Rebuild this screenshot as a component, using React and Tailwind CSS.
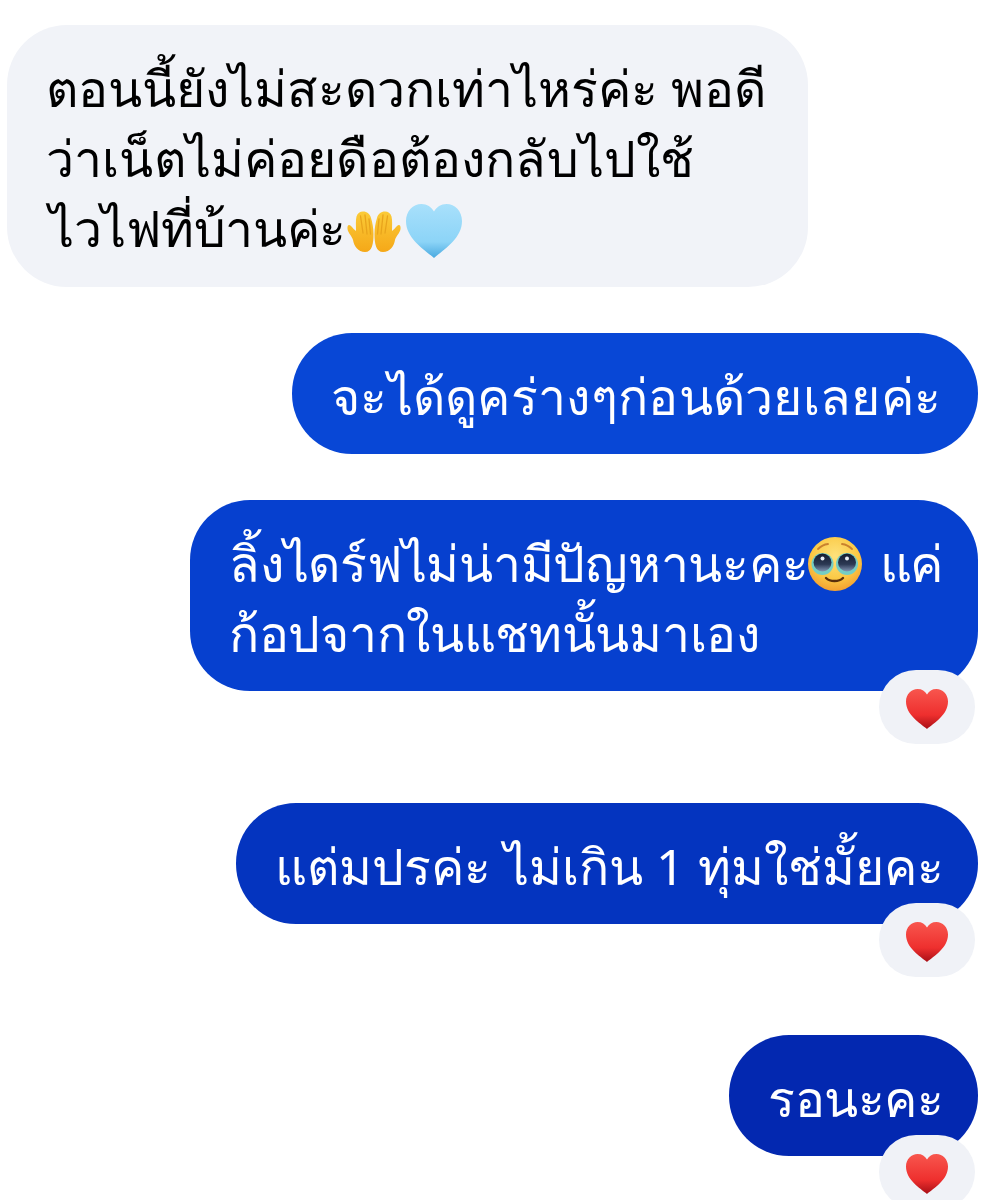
import React from 'react';

const RedHeart = () => (
  <svg width="44" height="42" viewBox="0 0 44 42" className="mt-[3px]">
    <defs>
      <linearGradient id="redHeart" x1="0" y1="0" x2="0" y2="1">
        <stop offset="0" stopColor="#f8564e" />
        <stop offset="0.65" stopColor="#ee2f2e" />
        <stop offset="1" stopColor="#a80f16" />
      </linearGradient>
    </defs>
    <path d="M22 41C15 35 1 27 1 13.500C1 6 6.500 1 12.500 1C17 1 20 3 22 6.500C24 3 27 1 31.500 1C37.500 1 43 6 43 13.500C43 27 29 35 22 41Z" fill="url(#redHeart)" />
  </svg>
);

const BlueHeart = () => (
  <svg width="58" height="56" viewBox="0 0 58 56" className="ml-[3px] mt-[6px]">
    <defs>
      <linearGradient id="blueHeart" x1="0" y1="0" x2="0" y2="1">
        <stop offset="0" stopColor="#a8e0fb" />
        <stop offset="0.7" stopColor="#8cd4f7" />
        <stop offset="1" stopColor="#4aa9e0" />
      </linearGradient>
    </defs>
    <path d="M29 55C20 47 1 36 1 18C1 8 8 1 16.500 1C22 1 26.500 4 29 8.500C31.500 4 36 1 41.500 1C50 1 57 8 57 18C57 36 38 47 29 55Z" fill="url(#blueHeart)" />
  </svg>
);

const HandShape = () => (
  <>
    <path d="M27.500 24C27.500 34 26 42 19 42C12 42 8 36 7 30C6 26 2 23 1.500 19C1 15 3 14 5 16C7 18 8.500 20 10 21C10 15 9.500 11 10.500 6.500C11.500 3 14 1.500 17 1.500C21 1.500 24 4 25 8C26.500 13 27.500 18 27.500 24Z" fill="url(#hand)" />
    <path d="M14.500 6L17 23M19 5L21 24M23 9L24.500 24" stroke="#e8a41c" strokeWidth="1.300" strokeLinecap="round" fill="none" />
  </>
);

const Hands = () => (
  <svg width="56" height="44" viewBox="0 0 56 44" className="mt-[8px]">
    <defs>
      <linearGradient id="hand" x1="0" y1="0" x2="0" y2="1">
        <stop offset="0" stopColor="#fbcb38" />
        <stop offset="1" stopColor="#f5a818" />
      </linearGradient>
    </defs>
    <HandShape />
    <g transform="translate(56 0) scale(-1 1)">
      <HandShape />
    </g>
  </svg>
);

const PleadingFace = () => (
  <svg width="54" height="54" viewBox="0 0 54 54" className="mt-[2px]">
    <defs>
      <radialGradient id="face" cx="0.5" cy="0.35" r="0.7">
        <stop offset="0" stopColor="#fde27c" />
        <stop offset="0.6" stopColor="#fbc945" />
        <stop offset="1" stopColor="#f3982c" />
      </radialGradient>
      <linearGradient id="eye" x1="0" y1="0" x2="0" y2="1">
        <stop offset="0" stopColor="#141c30" />
        <stop offset="0.6" stopColor="#2c3954" />
        <stop offset="1" stopColor="#8296b4" />
      </linearGradient>
    </defs>
    <circle cx="27" cy="27" r="27" fill="url(#face)" />
    <path d="M10 12C13 9 16 7.500 20 7M44 12C41 9 38 7.500 34 7" stroke="#c9822e" strokeWidth="1.800" fill="none" strokeLinecap="round" />
    <circle cx="14.500" cy="27" r="11" fill="#74cdc4" />
    <circle cx="39" cy="27" r="11" fill="#74cdc4" />
    <circle cx="14.500" cy="25.500" r="9" fill="url(#eye)" />
    <circle cx="39" cy="25.500" r="9" fill="url(#eye)" />
    <circle cx="14.500" cy="21.500" r="2" fill="#e8eef6" />
    <circle cx="39" cy="21.500" r="2" fill="#e8eef6" />
    <path d="M18 41C22 45 31 45 35 41" stroke="#5a2f0c" strokeWidth="2.400" fill="none" strokeLinecap="round" />
  </svg>
);

const Reaction = () => (
  <div className="absolute right-[3px] top-full mt-[-21px] flex h-[74px] w-[96px] items-center justify-center rounded-[37px] bg-[#f0f2f7]">
    <RedHeart />
  </div>
);

const Bubble = ({ width, color, liked, gap, children }) => (
  <div className={`relative self-end rounded-[60px] pb-[23px] pl-[39px] pt-[28px] text-[50px] leading-[70px] text-white ${width} ${color} ${gap}`}>
    {children}
    {liked && <Reaction />}
  </div>
);

export default function App() {
  return (
    <div className="flex h-[1200px] flex-col overflow-hidden bg-white pl-[7px] pr-[27px] pt-[25px] font-['Noto_Sans','DejaVu_Sans',sans-serif]">
      {/* Incoming message */}
      <div className="mb-[46px] h-[262px] w-[801px] rounded-[60px] bg-[#f1f3f8] pl-[39px] pt-[28px] text-[50px] leading-[70px] text-black">
        <div className="whitespace-nowrap">ตอนนี้ยังไม่สะดวกเท่าไหร่ค่ะ พอดี</div>
        <div className="whitespace-nowrap tracking-[0.15px]">ว่าเน็ตไม่ค่อยดือต้องกลับไปใช้</div>
        <div className="ml-[3px] flex items-center whitespace-nowrap tracking-[-0.3px]">
          ไวไฟที่บ้านค่ะ
          <Hands />
          <BlueHeart />
        </div>
      </div>

      {/* Outgoing messages */}
      <Bubble width="w-[686px]" color="bg-[#0847d6]" gap="mb-[46px]">
        <div className="whitespace-nowrap tracking-[0.3px]">จะได้ดูคร่างๆก่อนด้วยเลยค่ะ</div>
      </Bubble>
      <Bubble width="w-[788px]" color="bg-[#0640cf]" gap="mb-[112px]" liked>
        <div className="flex items-center whitespace-nowrap tracking-[-0.25px]">
          ลิ้งไดร์ฟไม่น่ามีปัญหานะคะ
          <PleadingFace />
          <span className="ml-[18px] tracking-[-2px]">แค่</span>
        </div>
        <div className="whitespace-nowrap tracking-[-0.3px]">ก้อปจากในแชทนั้นมาเอง</div>
      </Bubble>
      <Bubble width="w-[742px]" color="bg-[#0434bf]" gap="mb-[111px]" liked>
        <div className="whitespace-nowrap">แต่มปรค่ะ ไม่เกิน 1 ทุ่มใช่มั้ยคะ</div>
      </Bubble>
      <Bubble width="w-[249px]" color="bg-[#0328b0]" liked>
        <div className="whitespace-nowrap tracking-[-0.5px]">รอนะคะ</div>
      </Bubble>
    </div>
  );
}
